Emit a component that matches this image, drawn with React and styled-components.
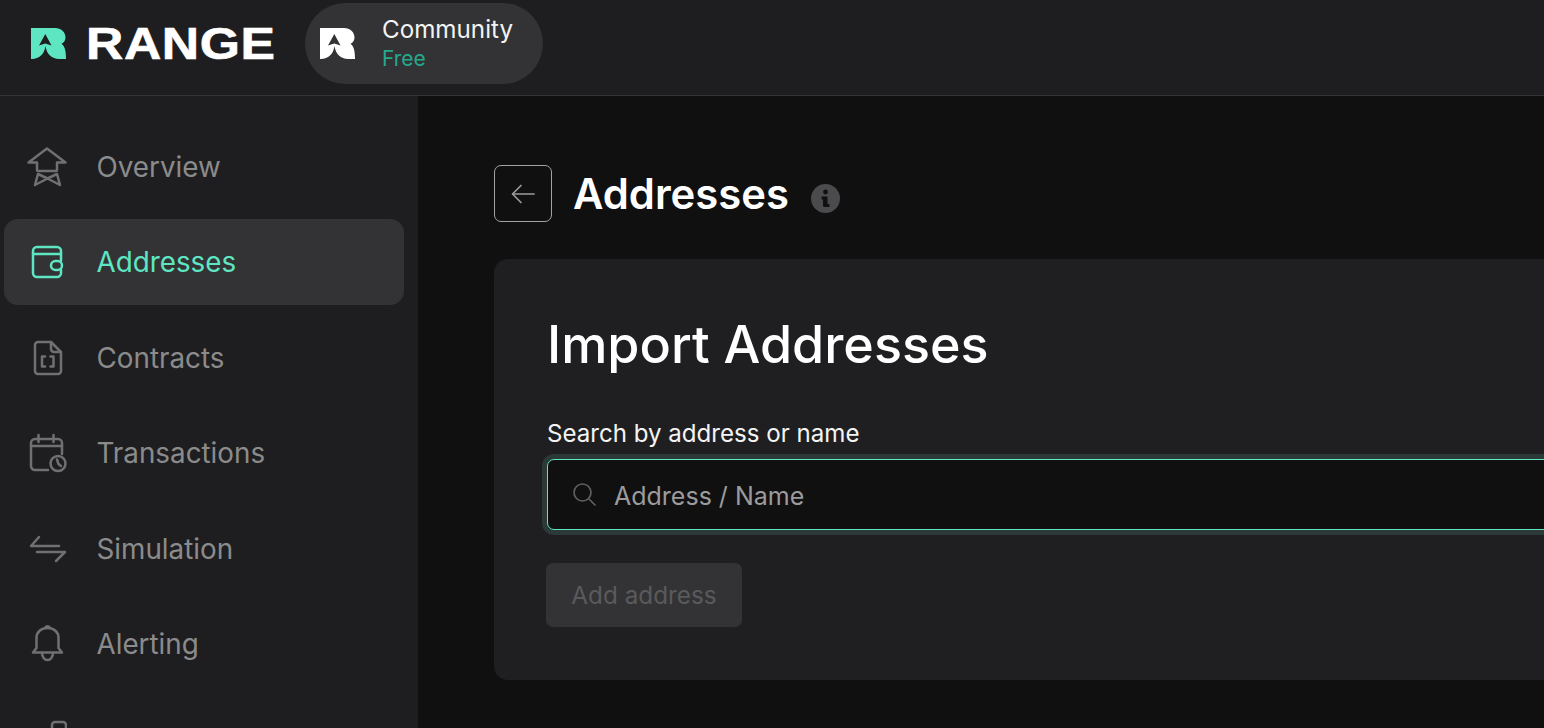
import React from "react";
import styled, { createGlobalStyle } from "styled-components";

const GlobalStyle = createGlobalStyle`
  html, body {
    margin: 0;
    height: 728px;
    overflow: hidden;
    background-color: #101011;
    font-family: Inter, "Liberation Sans", sans-serif;
  }
  * {
    box-sizing: border-box;
  }
`;

const Page = styled.div`
  display: flex;
  flex-direction: column;
  width: 1544px;
  height: 728px;
  overflow: hidden;
`;

const Header = styled.header`
  display: flex;
  align-items: center;
  flex: none;
  height: 96px;
  padding: 0 0 9px 31px;
  background-color: #1e1e20;
  border-bottom: 1px solid #343436;
`;

const Brand = styled.div`
  display: flex;
  align-items: center;
  gap: 20px;
  width: 274px;
`;

const BrandName = styled.span`
  display: inline-block;
  font-family: "Liberation Sans", sans-serif;
  font-size: 44px;
  font-weight: 700;
  line-height: 31px;
  letter-spacing: 0.5px;
  color: #ffffff;
  transform: scaleX(1.175);
  transform-origin: left center;
  -webkit-text-stroke: 0.6px #ffffff;
`;

const PlanPill = styled.div`
  display: flex;
  align-items: center;
  gap: 27px;
  width: 238px;
  height: 81px;
  padding-left: 15px;
  padding-top: 1px;
  border-radius: 41px;
  background-color: #333335;
`;

const PlanText = styled.div`
  display: flex;
  flex-direction: column;
`;

const PlanName = styled.span`
  font-size: 24.2px;
  line-height: 29px;
  color: #f4f4f4;
`;

const PlanTier = styled.span`
  font-size: 21px;
  line-height: 29px;
  color: #24a98b;
`;

const Body = styled.div`
  display: flex;
  flex: 1;
  min-height: 0;
`;

const Sidebar = styled.nav`
  display: flex;
  flex-direction: column;
  flex: none;
  gap: 9.6px;
  width: 418px;
  padding: 27.5px 14px 0 4px;
  background-color: #1e1e20;
`;

const NavItem = styled.a`
  display: flex;
  align-items: center;
  flex: none;
  gap: 29.5px;
  height: 86px;
  padding-left: 23px;
  border-radius: 14px;
  font-size: 27.8px;
  color: ${(p) => (p.$active ? "#5ee6c3" : "#8b8b8c")};
  background-color: ${(p) => (p.$active ? "#333335" : "transparent")};

  svg {
    flex: none;
    fill: none;
    stroke: ${(p) => (p.$active ? "#5ee6c3" : "#707072")};
    stroke-width: 2.5;
    stroke-linecap: round;
    stroke-linejoin: round;
  }
`;

const Main = styled.main`
  flex: 1;
  min-width: 0;
  padding: 69px 0 0 76px;
  background-color: #101011;
  overflow: hidden;
`;

const TitleRow = styled.div`
  display: flex;
  align-items: center;
  height: 57px;
  margin-bottom: 37px;
`;

const BackButton = styled.button`
  display: flex;
  align-items: center;
  justify-content: center;
  flex: none;
  width: 58px;
  height: 57px;
  padding: 0;
  margin-right: 21px;
  background: transparent;
  border: 1px solid #a3a3a5;
  border-radius: 7px;
`;

const PageTitle = styled.h1`
  margin: 2px 22px 0 0;
  font-size: 41.8px;
  font-weight: 600;
  line-height: 57px;
  color: #ffffff;
`;

const InfoIcon = styled.svg`
  flex: none;
  width: 29px;
  height: 29px;
  margin-top: 9px;
`;

const Card = styled.section`
  width: 1300px;
  height: 421px;
  padding: 52px 0 0 53px;
  background-color: #1f1f22;
  border-radius: 14px;
`;

const CardTitle = styled.h2`
  margin: 0 0 40px;
  font-size: 52px;
  font-weight: 500;
  line-height: 68px;
  color: #ffffff;
`;

const FieldLabel = styled.label`
  display: block;
  margin-bottom: 10px;
  font-size: 24.1px;
  line-height: 30px;
  color: #f4f4f4;
`;

const SearchBox = styled.div`
  display: flex;
  align-items: center;
  gap: 17px;
  width: 100%;
  height: 71px;
  padding-left: 24px;
  margin-bottom: 33px;
  background-color: #101011;
  border: 1px solid #5ee6c3;
  border-radius: 7px;
  box-shadow: 0 0 0 5px #2b3937;
`;

const SearchInput = styled.input`
  flex: 1;
  padding: 2px 0 0;
  background: transparent;
  border: none;
  outline: none;
  font-family: inherit;
  font-size: 25px;
  color: #f4f4f4;

  &::placeholder {
    color: #9b9b9d;
    opacity: 1;
  }
`;

const AddButton = styled.button`
  display: block;
  width: 196px;
  height: 64px;
  padding: 0;
  margin-left: -1px;
  background-color: #333335;
  border: none;
  border-radius: 7px;
  font-family: inherit;
  font-size: 24.3px;
  color: #5a5a5c;
`;

const RangeMark = ({ color }) => (
  <svg width="35" height="31" viewBox="0 0 35 31">
    <path
      fill={color}
      fillRule="evenodd"
      d="M0 0H24C30 0 34.5 4 34.5 9.5C34.5 12.5 33 14.5 30.5 15.8C33.5 18 35 22 35 31H28C21 31 15.5 26 14.5 18C13.5 26 8 31 1 31H0ZM14.3 6L20.5 17.5L14.3 15.5L8 17.5Z"
    />
  </svg>
);

const NavIcon = ({ children }) => (
  <svg width="40" height="40" viewBox="0 0 40 40">
    {children}
  </svg>
);

const navItems = [
  {
    label: "Overview",
    icon: (
      <>
        <path d="M20 1.5L38.5 15.5H30V23a1 1 0 0 1-1 1H11a1 1 0 0 1-1-1V15.5H1.5Z" />
        <path d="M11 27L8 38L20.5 31.5L33 38L30 27L20.5 31.5Z" />
      </>
    ),
  },
  {
    label: "Addresses",
    active: true,
    icon: (
      <>
        <path d="M34 19V9a4 4 0 0 0-4-4H10a4 4 0 0 0-4 4V31a4 4 0 0 0 4 4H30a4 4 0 0 0 4-4V28" />
        <path d="M6 12H34" />
        <rect x="24" y="19" width="11" height="9" rx="4.5" />
      </>
    ),
  },
  {
    label: "Contracts",
    icon: (
      <>
        <path d="M11 4H24L34 14V33a3 3 0 0 1-3 3H11a3 3 0 0 1-3-3V7a3 3 0 0 1 3-3Z" />
        <path d="M24 4V11a3 3 0 0 0 3 3H34" />
        <path d="M18 18.5H15V28.5H18" />
        <path d="M23.5 18.5H26.5V28.5H23.5" />
      </>
    ),
  },
  {
    label: "Transactions",
    icon: (
      <>
        <path d="M21 37H8a4 4 0 0 1-4-4V10a4 4 0 0 1 4-4H31a4 4 0 0 1 4 4V21" />
        <path d="M4 13H35" />
        <path d="M11.5 2V9" />
        <path d="M26.5 2V9" />
        <circle cx="31" cy="30.5" r="7.5" />
        <path d="M30 26.5L31.5 31L34 33" />
      </>
    ),
  },
  {
    label: "Simulation",
    icon: (
      <>
        <path d="M32 17H4L12 8" />
        <path d="M10 23H38L29 32" />
      </>
    ),
  },
  {
    label: "Alerting",
    icon: (
      <>
        <path d="M6 28.5H35L31.5 24V14C31.5 8 27 4 20.5 4C14 4 9.5 8 9.5 14V24Z" />
        <path d="M18 4a2.6 2.4 0 0 1 5 0" />
        <path d="M15 29a5.5 7 0 0 0 11 0" />
      </>
    ),
  },
  {
    icon: <path d="M25 20V5a3 3 0 0 1 3-3h8a3 3 0 0 1 3 3V20" />,
  },
];

function App() {
  return (
    <Page>
      <GlobalStyle />
      <Header>
        <Brand>
          <RangeMark color="#5ee6c3" />
          <BrandName>RANGE</BrandName>
        </Brand>
        <PlanPill>
          <RangeMark color="#ffffff" />
          <PlanText>
            <PlanName>Community</PlanName>
            <PlanTier>Free</PlanTier>
          </PlanText>
        </PlanPill>
      </Header>
      <Body>
        <Sidebar>
          {navItems.map((item, i) => (
            <NavItem key={i} $active={item.active}>
              <NavIcon>{item.icon}</NavIcon>
              {item.label}
            </NavItem>
          ))}
        </Sidebar>
        <Main>
          <TitleRow>
            <BackButton>
              <svg width="24" height="24" viewBox="0 0 24 24" fill="none" stroke="#9a9a9c" strokeWidth="1.7" strokeLinecap="round" strokeLinejoin="round">
                <path d="M23 12H2" />
                <path d="M10 3.5L1.5 12L10 20.5" />
              </svg>
            </BackButton>
            <PageTitle>Addresses</PageTitle>
            <InfoIcon viewBox="0 0 29 29">
              <circle cx="14.5" cy="14.5" r="14.5" fill="#4b4b4d" />
              <circle cx="14.5" cy="8" r="2.4" fill="#101011" />
              <path d="M10.5 12.5H16.5V20H18.5V23H13.5A1.5 1.5 0 0 1 12 21.5V15.5H10.5Z" fill="#101011" />
            </InfoIcon>
          </TitleRow>
          <Card>
            <CardTitle>Import Addresses</CardTitle>
            <FieldLabel htmlFor="address-search">Search by address or name</FieldLabel>
            <SearchBox>
              <svg width="25" height="25" viewBox="0 0 25 25" fill="none" stroke="#5f5f61" strokeWidth="1.7" strokeLinecap="round">
                <circle cx="10.5" cy="10.5" r="8.5" />
                <path d="M17 17L23 23" />
              </svg>
              <SearchInput id="address-search" placeholder="Address / Name" />
            </SearchBox>
            <AddButton disabled>Add address</AddButton>
          </Card>
        </Main>
      </Body>
    </Page>
  );
}

export default App;
